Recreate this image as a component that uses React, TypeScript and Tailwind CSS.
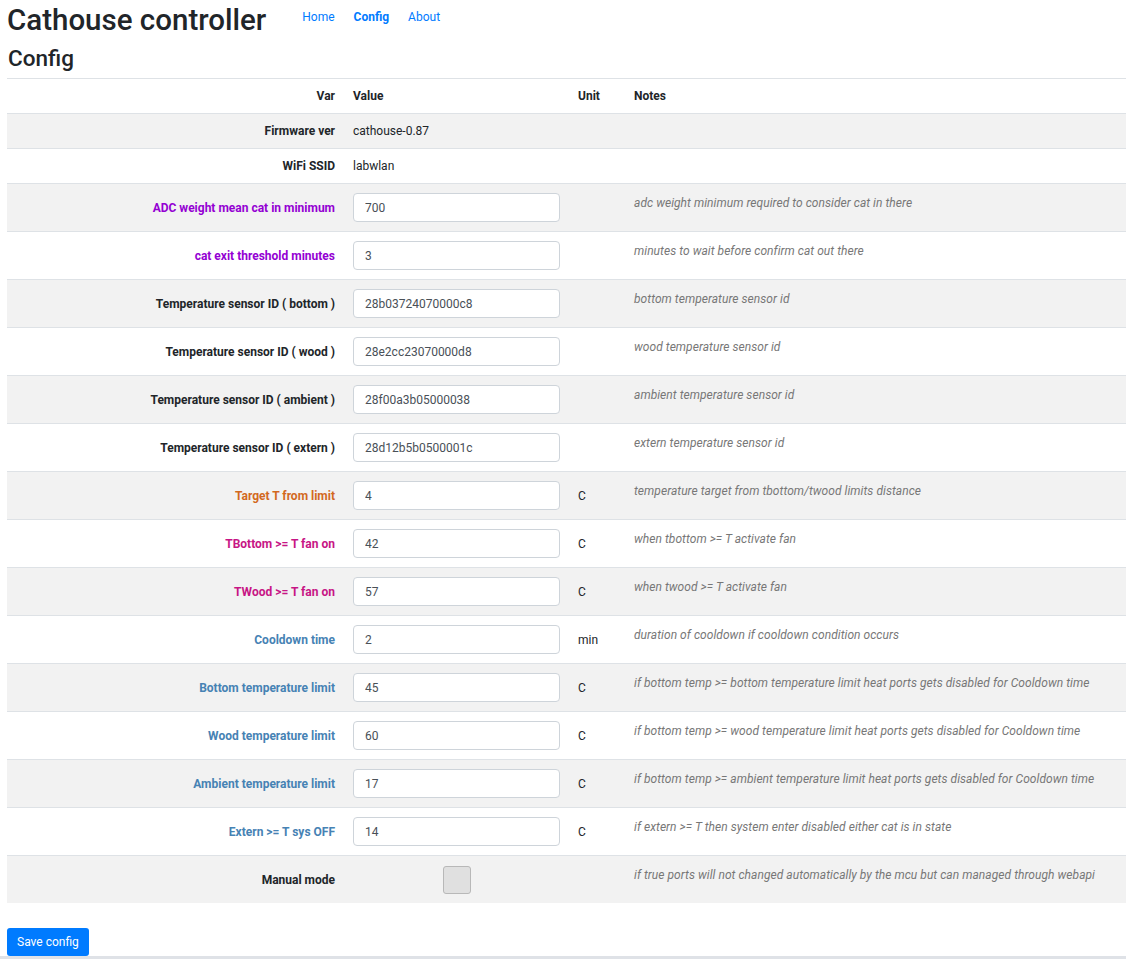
import React from "react";

type Row = {
  label: string;
  value?: string;
  input?: boolean;
  check?: boolean;
  unit?: string;
  note?: string;
  color?: string;
};

// label colours follow the groups used by the firmware page
const ROWS: Row[] = [
  { label: "Firmware ver", value: "cathouse-0.87" },
  { label: "WiFi SSID", value: "labwlan" },
  { label: "ADC weight mean cat in minimum", value: "700", input: true, note: "adc weight minimum required to consider cat in there", color: "text-[#9400d3]" },
  { label: "cat exit threshold minutes", value: "3", input: true, note: "minutes to wait before confirm cat out there", color: "text-[#9400d3]" },
  { label: "Temperature sensor ID ( bottom )", value: "28b03724070000c8", input: true, note: "bottom temperature sensor id" },
  { label: "Temperature sensor ID ( wood )", value: "28e2cc23070000d8", input: true, note: "wood temperature sensor id" },
  { label: "Temperature sensor ID ( ambient )", value: "28f00a3b05000038", input: true, note: "ambient temperature sensor id" },
  { label: "Temperature sensor ID ( extern )", value: "28d12b5b0500001c", input: true, note: "extern temperature sensor id" },
  { label: "Target T from limit", value: "4", input: true, unit: "C", note: "temperature target from tbottom/twood limits distance", color: "text-[#d2691e]" },
  { label: "TBottom >= T fan on", value: "42", input: true, unit: "C", note: "when tbottom >= T activate fan", color: "text-[#c71585]" },
  { label: "TWood >= T fan on", value: "57", input: true, unit: "C", note: "when twood >= T activate fan", color: "text-[#c71585]" },
  { label: "Cooldown time", value: "2", input: true, unit: "min", note: "duration of cooldown if cooldown condition occurs", color: "text-[#4682b4]" },
  { label: "Bottom temperature limit", value: "45", input: true, unit: "C", note: "if bottom temp >= bottom temperature limit heat ports gets disabled for Cooldown time", color: "text-[#4682b4]" },
  { label: "Wood temperature limit", value: "60", input: true, unit: "C", note: "if bottom temp >= wood temperature limit heat ports gets disabled for Cooldown time", color: "text-[#4682b4]" },
  { label: "Ambient temperature limit", value: "17", input: true, unit: "C", note: "if bottom temp >= ambient temperature limit heat ports gets disabled for Cooldown time", color: "text-[#4682b4]" },
  { label: "Extern >= T sys OFF", value: "14", input: true, unit: "C", note: "if extern >= T then system enter disabled either cat is in state", color: "text-[#4682b4]" },
  { label: "Manual mode", check: true, note: "if true ports will not changed automatically by the mcu but can managed through webapi" },
];

const GRID = "grid grid-cols-[334px_231px_56px_1fr]";

export default function App() {
  return (
    <div className="min-h-[959px] flex flex-col bg-white text-[#212529] font-['Roboto',sans-serif]">
      <div className="pl-[7px]">
        {/* Header */}
        <div className="flex items-start">
          <h1 className="text-[29.5px] font-medium leading-[42px] mt-[-1px]">Cathouse controller</h1>
          <nav className="flex gap-[19px] ml-[36px] mt-[8px] text-[12px] text-[#007bff]">
            <span>Home</span>
            <span className="font-bold">Config</span>
            <span>About</span>
          </nav>
        </div>
        <h2 className="text-[22.5px] font-medium leading-[32px] mt-[1px] mb-[4px] pl-px">Config</h2>

        {/* Table */}
        <div className="text-[12px]">
          <div className={`${GRID} h-[35px] border-t border-[#dee2e6] items-center font-bold`}>
            <div className="text-right pr-[6px]">Var</div>
            <div className="pl-[12px]">Value</div>
            <div className="pl-[6px]">Unit</div>
            <div className="pl-[6px]">Notes</div>
          </div>
          {ROWS.map((r, i) => (
            <div
              key={r.label}
              className={`${GRID} border-t border-[#dee2e6] ${i % 2 === 0 ? "bg-[#f2f2f2]" : "bg-white"} ${r.input || r.check ? "h-[48px]" : "h-[35px]"}`}
            >
              <div className={`flex items-center justify-end pr-[6px] font-bold ${r.color ?? "text-[#212529]"}`}>
                {r.label}
              </div>
              <div className={`flex items-center ${r.check ? "justify-center" : "pl-[12px]"}`}>
                {r.input ? (
                  <input
                    readOnly
                    value={r.value}
                    className="w-[207px] h-[29px] border border-[#ced4da] rounded-[4px] bg-white px-[11px] text-[12px] text-[#495057] outline-none"
                  />
                ) : r.check ? (
                  <div className="w-[28px] h-[28px] rounded-[3px] border border-[#b8b8b8] bg-[#e0e0e0]" />
                ) : (
                  <span>{r.value}</span>
                )}
              </div>
              <div className="flex items-center pl-[6px]">{r.unit}</div>
              <div className="pl-[6px] pt-[10px] italic text-[#777777] tracking-[0.05px]">{r.note}</div>
            </div>
          ))}
        </div>

        <button className="mt-[25px] h-[28px] px-[10px] rounded-[3px] bg-[#007bff] text-white text-[12px]">
          Save config
        </button>
      </div>
      <div className="flex-1 bg-[#dfe2e7]" />
    </div>
  );
}
